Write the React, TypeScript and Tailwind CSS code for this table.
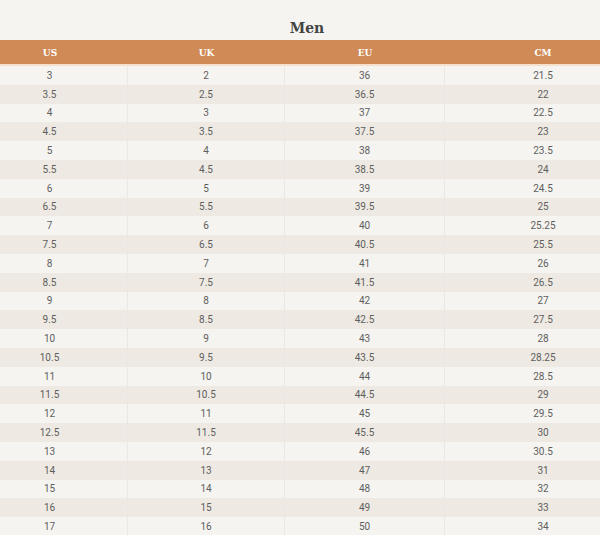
const rows: [string, string, string, string][] = [
  ['3', '2', '36', '21.5'],
  ['3.5', '2.5', '36.5', '22'],
  ['4', '3', '37', '22.5'],
  ['4.5', '3.5', '37.5', '23'],
  ['5', '4', '38', '23.5'],
  ['5.5', '4.5', '38.5', '24'],
  ['6', '5', '39', '24.5'],
  ['6.5', '5.5', '39.5', '25'],
  ['7', '6', '40', '25.25'],
  ['7.5', '6.5', '40.5', '25.5'],
  ['8', '7', '41', '26'],
  ['8.5', '7.5', '41.5', '26.5'],
  ['9', '8', '42', '27'],
  ['9.5', '8.5', '42.5', '27.5'],
  ['10', '9', '43', '28'],
  ['10.5', '9.5', '43.5', '28.25'],
  ['11', '10', '44', '28.5'],
  ['11.5', '10.5', '44.5', '29'],
  ['12', '11', '45', '29.5'],
  ['12.5', '11.5', '45.5', '30'],
  ['13', '12', '46', '30.5'],
  ['14', '13', '47', '31'],
  ['15', '14', '48', '32'],
  ['16', '15', '49', '33'],
  ['17', '16', '50', '34'],
]

const headers = ['US', 'UK', 'EU', 'CM']

export default function App() {
  return (
    <div className="w-[600px] h-[535px] overflow-hidden bg-[#f5f4f0]">
      <h2
        className="pt-[18px] h-[40px] text-center text-[14px] font-bold text-[#444] leading-[20px] pl-[14px]"
        style={{ fontFamily: '"DejaVu Serif", serif' }}
      >
        Men
      </h2>
      <div className="-ml-[28px] w-[669px]">
        <div
          className="grid grid-cols-[156px_157px_160px_196px] h-[26px] pt-[3px] bg-[#cf8a55] border-b-2 border-[#f6dfcb] items-center text-white text-[9px] font-bold"
          style={{ fontFamily: '"DejaVu Serif", serif' }}
        >
          {headers.map(h => (
            <div key={h} className="text-center">{h}</div>
          ))}
        </div>
        {rows.map((r, i) => (
          <div
            key={i}
            className={`grid grid-cols-[156px_157px_160px_196px] h-[18.8px] items-center text-[10px] text-[#5e5e5e] ${i % 2 ? 'bg-[#eeeae3]' : 'bg-[#f5f4f0]'}`}
            style={{ fontFamily: 'Roboto, sans-serif' }}
          >
            {r.map((c, j) => (
              <div key={j} className={`h-full flex items-center justify-center ${j < 3 ? 'border-r border-[#ebe8e3]' : ''}`}>
                {c}
              </div>
            ))}
          </div>
        ))}
      </div>
    </div>
  )
}
